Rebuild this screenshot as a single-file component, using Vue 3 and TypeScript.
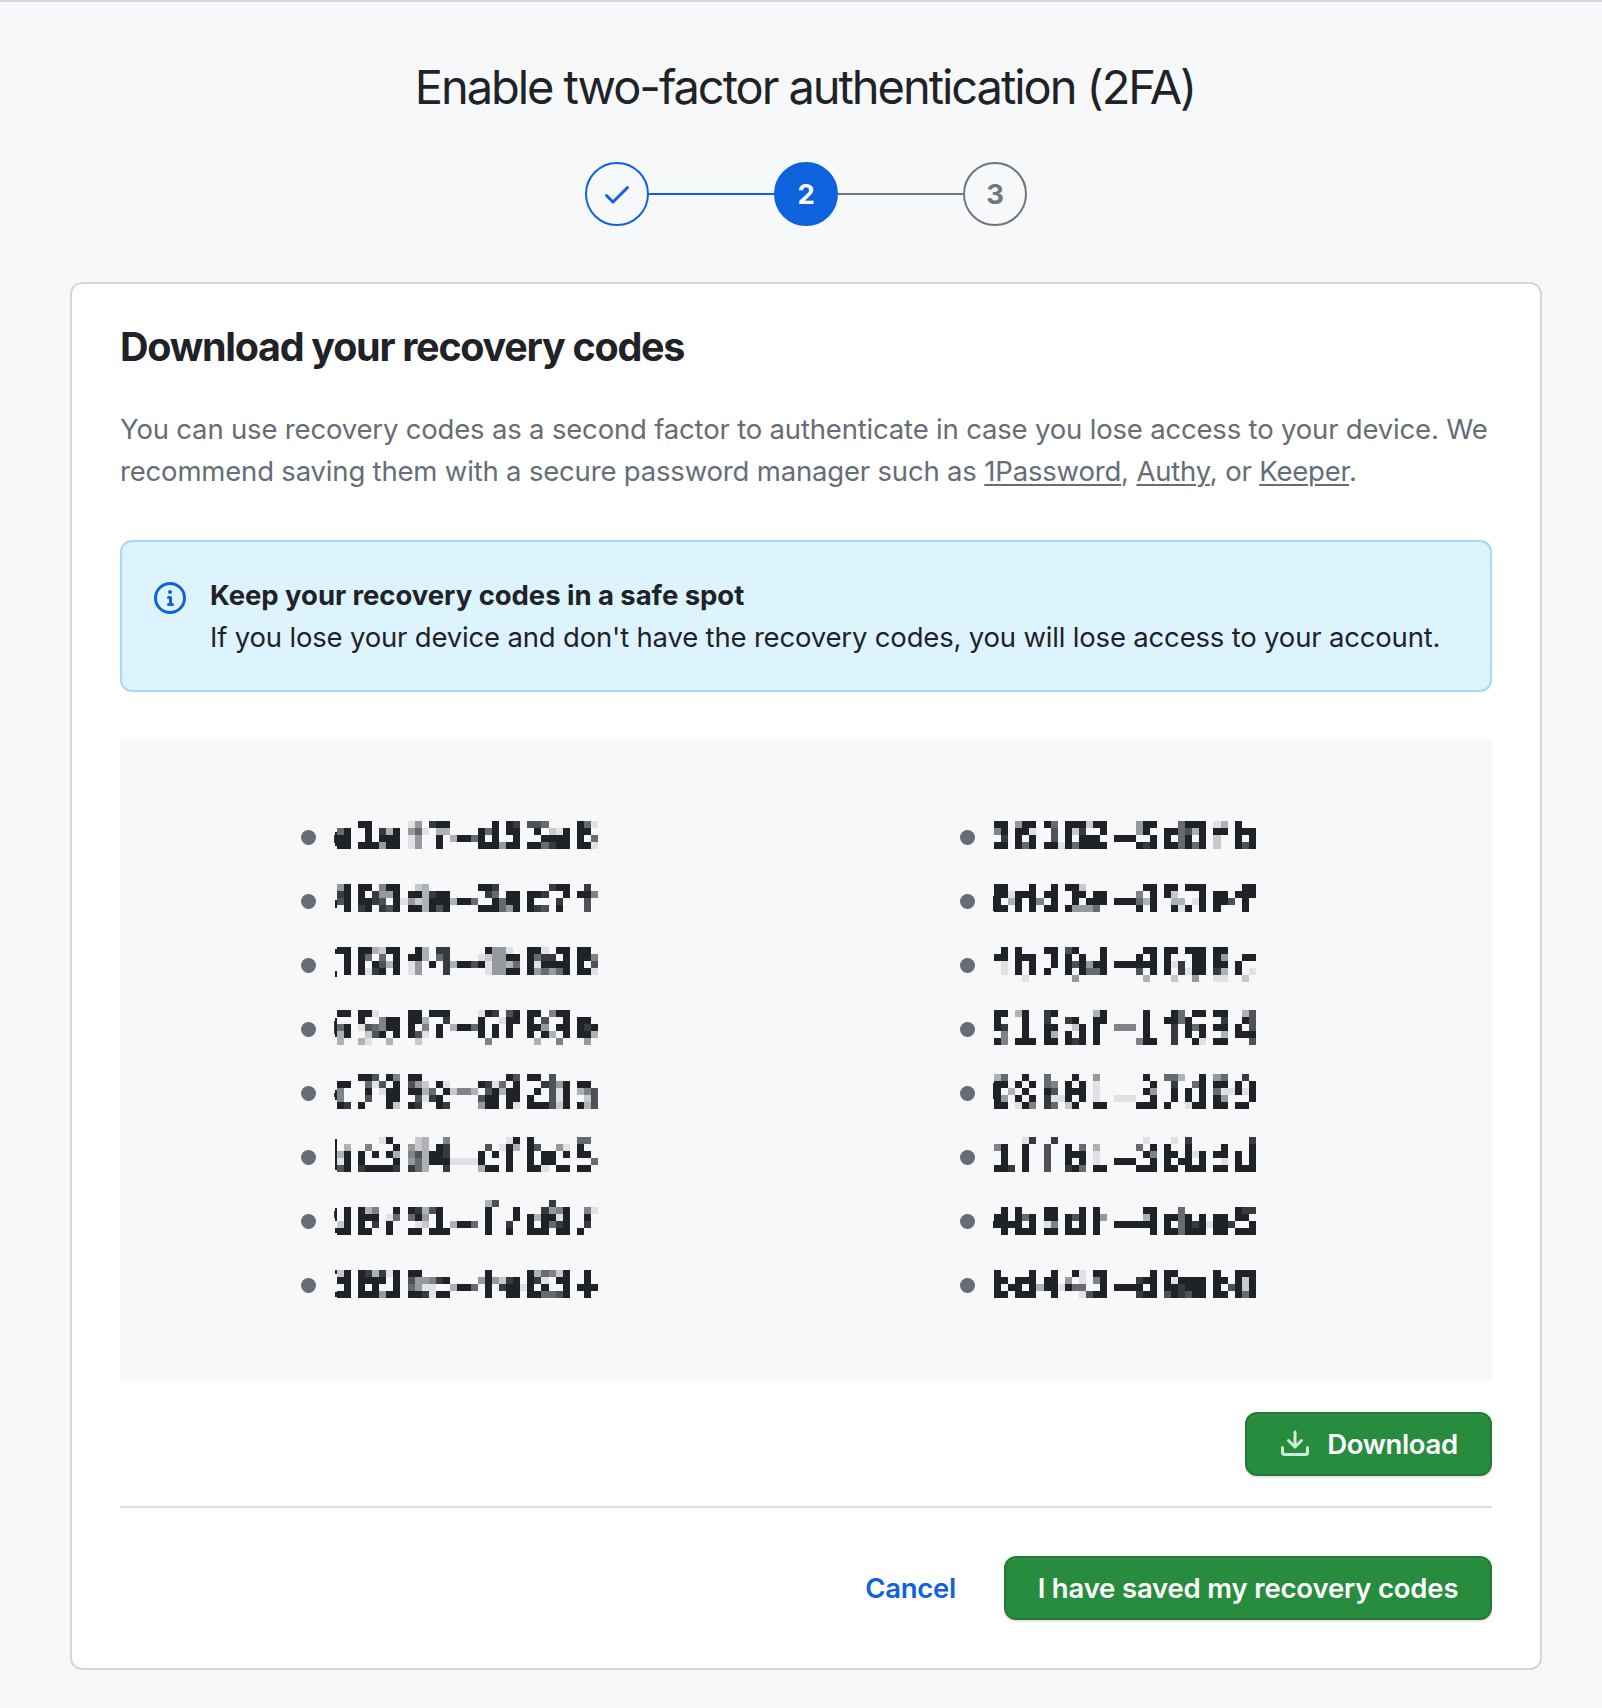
<script setup lang="ts">
interface Mosaic {
  top: number
  rows: string[]
  edge?: [number, number][]
}

interface Cell {
  x: number
  y: number
  w: number
  h: number
  fill: string
}

// Each row is a strip of redaction blocks: "." is clear, 1-9 is the darkness.
const left: Mosaic[] = [
  { top: 15, edge: [[11, 14]], rows: [
    '...99.....14.899......9.98.776....961',
    '69..9.839.461.33....969.99..9.219.99.',
    '99..9.999.14..9.39969.9..9...9999.9.6',
    '99.999499.14..9.....999499.996899.991'] },
  { top: 14, edge: [[16, 8]], rows: [
    '49.99.599..23.......998.......899..8.',
    '89.9.8449.993899.....86.99.998..9.995',
    '79.9987.914239993996..9699.9...8...7.',
    '.9.89.879.993979....999649.987.9...7.'] },
  { top: 13, edge: [[2, 5], [24, 6]], rows: [
    '99.993299..93.88.....9441..991.99.99.',
    '.9.96.6.9.993.68....124499.9688.9.995',
    '.9.9.9739.14.9.83997914436.919999.9.7',
    '.9.9189.9.14...8.....14499.946469.991'] },
  { top: 12, edge: [[8, 19]], rows: [
    '99.991....99.999....198.79.99.599....',
    '...9..599.993..8....9..199.9.7..9.99.',
    '69.176599.9.5.9.39969.9.9..994.99.989',
    '39..279.9.971.9.....9.9.9..9.93.9.993',
    '3..31..3...2.........5......3..5...4.'] },
  { top: 12, edge: [[16, 10]], rows: [
    '...997.95.99............97.99.7......',
    '99..617.9.742.91....9816.9...8749.99.',
    '5...9.199.9936.92553.79399..9.719.357',
    '5...7..99..7189.....799.99.9..719..27',
    '98.9...92.98..98....499.91.999729.937'] },
  { top: 11, edge: [[2, 31]], rows: [
    '......19...23..5........19.9......66.',
    '.3..5...9.423.98.....7.193.97..41.9..',
    '39.9.9.93.573998....9.9.9..9.99.9.99.',
    '19.9....9.46399911119...9..9.99.....6',
    '79.899998.863..8....399.9..991.99.99.'] },
  { top: 10, edge: [[8, 13], [28, 5]], rows: [
    '.....................37.......8......',
    '.9.935..9.98379......9...9...8459..51',
    '.9.999.16.694.9......9...9.939919..9.',
    '29.9.8.9...12.9.3996.9..8..9.9689..8.',
    '99.99..9..99.999.....9..9..999.99.9..'] },
  { top: 16, edge: [[0, 4], [22, 5]], rows: [
    '29.983819.99.........9.....936529..9.',
    '99.9999.9.744589....494289.981.99..9.',
    '.9.9.9..9.6411..3996.9.89919.9..9.999',
    '99.999499.998199.....9..99.996679..9.'] },
]

const right: Mosaic[] = [
  { top: 15, rows: [
    '99.499.96.999299....499...6999.13.9..',
    '59.991..7.928..9....49..996739.99.999',
    '.8.9.9..7.9.999..999..9.9.69.9.2..9.9',
    '99.969.991969999....989.996969.2..979'] },
  { top: 14, edge: [[12, 15]], rows: [
    '99...9..9.992........99.99.999.....99',
    '991999.99..99.99....5.9.92...9.99.999',
    '9.39.95.9..9.999.999639..33.19.997.9.',
    '99.9.9.99.94446.....9.9..919.9.9...9.'] },
  { top: 13, rows: [
    '.9.9...99.79...9.....99.99.999.99....',
    '99.999..9.9.9..9....9.9.9...99.94..99',
    '.1.9.9..9.979499.999999.918.99.99.9..',
    '.1.9.9.9..9.9669....7.9.9.8199.83.9.1',
    '....1......4.........3...2..4..11..2.'] },
  { top: 12, rows: [
    '99.39..89.....39.....9...96.99.99..37',
    '9...9..8..89..99.....9..9969....8..97',
    '98..9..99..29.9..555.9...8.969.99.9.7',
    '.5..9..93.9.9.9......9...8.9.9..3.999',
    '95.999.99.989.9.....599..8..91.99...7'] },
  { top: 12, edge: [[9, 16]], rows: [
    '36..9..6...9..4......9..663..9.46..8.',
    '99.9.9.65.9.9.1.......9..8..69.99.9.9',
    '9.3.9..97.999.1......94..9.9.9.611919',
    '94.9.9.8119.9.1..111..9..9.9.9.94...9',
    '99.195.86.29..99....999.9..199.99.99.'] },
  { top: 11, rows: [
    '....18..8............1...1.8........8',
    '59..9..7..9.6.3.....6.9.9..9....9...9',
    '.9..9..7..999.1......95.99.919.99.9.9',
    '.9..9..7..9.9.1..999..9.9.99.9..1.9.9',
    '998.9..7..896.99....999.99.999.99.999'] },
  { top: 17, edge: [[14, 7]], rows: [
    '.9.9...99...9.9......99...6.......988',
    '99.969.99.979.94.....39.9969.9.99.99.',
    '9999.9.15.9.9.9..999999.9.69891998..9',
    '.9.999.99.999.9.......9.996999.99.999'] },
  { top: 16, rows: [
    '9....9..9..91.99......9.99.....9..999',
    '99.999.99.4.1.59....899.919999.99.929',
    '9.99.93991966..9.9999.9.998999.9.7929',
    '99.999..9...1799....899.798799.99.969'] },
]

function shade(level: number): string {
  const t = level / 9
  const mix = (a: number, b: number) => Math.round(a + (b - a) * t)
  return `rgb(${mix(247, 31)}, ${mix(249, 35)}, ${mix(251, 40)})`
}

function cells(m: Mosaic, pitch: number, bleed: boolean): Cell[] {
  const out: Cell[] = []
  m.rows.forEach((row, r) => {
    for (let c = 0; c < row.length; c++) {
      if (row[c] === '.') continue
      const x = Math.round(c * pitch)
      out.push({ x, y: r * 7, w: Math.round((c + 1) * pitch) - x, h: 7, fill: shade(Number(row[c])) })
    }
  })
  // Slivers left uncovered at the leading edge of the redaction.
  for (const [y, h] of m.edge ?? []) {
    out.push({ x: bleed ? -2 : -1, y, w: bleed ? 2 : 1, h, fill: shade(9) })
    if (bleed && h > 9 && h < 30) out.push({ x: -3, y: y + 3, w: 1, h: h - 6, fill: shade(8) })
  }
  return out
}

const columns = [
  { name: 'first', items: left.map((m) => ({ top: m.top, cells: cells(m, 7.05, true) })) },
  { name: 'second', items: right.map((m) => ({ top: m.top, cells: cells(m, 7.08, false) })) },
]
</script>

<template>
  <main class="page">
    <h1 class="title">Enable two-factor authentication (2FA)</h1>
    <div class="steps">
      <span class="step done">
        <svg width="32" height="32" viewBox="0 0 16 16" fill="currentColor"><path d="M13.78 4.22a.75.75 0 0 1 0 1.06l-7.25 7.25a.75.75 0 0 1-1.06 0L2.22 9.28a.751.751 0 0 1 .018-1.042.751.751 0 0 1 1.042-.018L6 10.94l6.72-6.72a.75.75 0 0 1 1.06 0Z" /></svg>
      </span>
      <span class="line blue"></span>
      <span class="step current">2</span>
      <span class="line"></span>
      <span class="step">3</span>
    </div>

    <section class="card">
      <h2>Download your recovery codes</h2>
      <p class="intro">
        You can use recovery codes as a second factor to authenticate in case you lose access to your device. We<br />
        recommend saving them with a secure password manager such as <a>1Password</a>, <a>Authy</a>, or <a>Keeper</a>.
      </p>

      <div class="notice">
        <svg width="32" height="32" viewBox="0 0 16 16" fill="currentColor"><path d="M0 8a8 8 0 1 1 16 0A8 8 0 0 1 0 8Zm8-6.5a6.5 6.5 0 1 0 0 13 6.5 6.5 0 0 0 0-13ZM6.5 7.75A.75.75 0 0 1 7.25 7h1a.75.75 0 0 1 .75.75v2.75h.25a.75.75 0 0 1 0 1.5h-2a.75.75 0 0 1 0-1.5h.25v-2h-.25a.75.75 0 0 1-.75-.75ZM8 6a1 1 0 1 1 0-2 1 1 0 0 1 0 2Z" /></svg>
        <div>
          <strong>Keep your recovery codes in a safe spot</strong><br />
          <span>If you lose your device and don't have the recovery codes, you will lose access to your account.</span>
        </div>
      </div>

      <div class="codes">
        <ul v-for="col in columns" :key="col.name" :class="col.name">
          <li v-for="(item, i) in col.items" :key="i">
            <i class="dot"></i>
            <svg class="mosaic" :style="{ marginTop: item.top + 'px' }" width="266" height="36" viewBox="-3 0 266 36" shape-rendering="crispEdges">
              <rect v-for="(c, k) in item.cells" :key="k" :x="c.x" :y="c.y" :width="c.w" :height="c.h" :fill="c.fill" />
            </svg>
          </li>
        </ul>
      </div>

      <div class="row">
        <button class="btn download">
          <svg width="32" height="32" viewBox="0 0 16 16" fill="currentColor"><path d="M2.75 14A1.75 1.75 0 0 1 1 12.25v-2.5a.75.75 0 0 1 1.5 0v2.5c0 .138.112.25.25.25h10.5a.25.25 0 0 0 .25-.25v-2.5a.75.75 0 0 1 1.5 0v2.5A1.75 1.75 0 0 1 13.25 14Z" /><path d="M7.25 7.689V2a.75.75 0 0 1 1.5 0v5.689l1.97-1.969a.749.749 0 1 1 1.06 1.06l-3.25 3.25a.749.749 0 0 1-1.06 0L4.22 6.78a.749.749 0 1 1 1.06-1.06l1.97 1.969Z" /></svg>
          <span>Download</span>
        </button>
      </div>
      <div class="rule"></div>
      <div class="row">
        <a class="cancel">Cancel</a>
        <button class="btn saved"><span>I have saved my recovery codes</span></button>
      </div>
    </section>
  </main>
</template>

<style>
body {
  margin: 0;
  background: #f6f8fa;
}
</style>

<style scoped>
.page {
  box-sizing: border-box;
  width: 1602px;
  height: 1708px;
  padding: 55px 60px 0 70px;
  border-top: 2px solid #d0d7de;
  background: #f6f8fa;
  color: #1f2328;
  font: 400 27.5px/42px Inter, "Liberation Sans", sans-serif;
  letter-spacing: -0.18px;
  white-space: nowrap;
  overflow: hidden;
}
.title {
  margin: 0;
  padding-right: 2px;
  font-size: 47px;
  line-height: 60px;
  font-weight: 385;
  text-align: center;
  letter-spacing: -2.05px;
}
.steps {
  display: flex;
  align-items: center;
  justify-content: center;
  margin-top: 45px;
}
.step {
  box-sizing: border-box;
  display: flex;
  align-items: center;
  justify-content: center;
  width: 64px;
  height: 64px;
  border: 2px solid #6e7781;
  border-radius: 50%;
  color: #6e7781;
  font-weight: 700;
}
.done {
  border-color: #0f62de;
  color: #0f62de;
}
.current {
  border-color: #0f62de;
  background: #0f62de;
  color: #fff;
}
.line {
  width: 125px;
  height: 2px;
  background: #6e7781;
}
.blue {
  background: #0f62de;
}
.card {
  box-sizing: border-box;
  height: 1388px;
  margin-top: 56px;
  padding: 38px 48px 48px;
  border: 2px solid #d0d7de;
  border-radius: 12px;
  background: #fff;
}
h2 {
  margin: 0;
  font-size: 39.5px;
  line-height: 50px;
  font-weight: 650;
  letter-spacing: -1.28px;
}
.intro {
  margin: 36px 0 48px;
  color: #656d76;
}
.intro a {
  text-decoration: underline;
  text-decoration-thickness: 2px;
  text-underline-offset: 3px;
}
.notice {
  box-sizing: border-box;
  display: flex;
  gap: 24px;
  height: 152px;
  padding: 32px;
  border: 2px solid #a6d8ff;
  border-radius: 12px;
  background: #ddf4ff;
}
.notice svg {
  margin-top: 8px;
  color: #0f62de;
  flex: none;
}
.notice strong {
  font-weight: 650;
  letter-spacing: -0.05px;
}
.codes {
  box-sizing: border-box;
  display: grid;
  grid-template-columns: 659px 1fr;
  height: 640px;
  margin: 48px 0 32px;
  padding: 66px 0 0 181px;
  background: #f6f8fa;
}
ul {
  margin: 0;
  padding: 0;
  list-style: none;
}
li {
  display: flex;
  gap: 18px;
  height: 64px;
}
.second li {
  gap: 16px;
}
.dot {
  flex: none;
  width: 15px;
  height: 15px;
  margin-top: 24px;
  border-radius: 50%;
  background: #656d76;
}
.mosaic {
  flex: none;
}
.row {
  display: flex;
  justify-content: flex-end;
  align-items: center;
  gap: 48px;
}
.btn {
  box-sizing: border-box;
  display: flex;
  align-items: center;
  justify-content: center;
  height: 64px;
  margin: 0;
  padding: 0;
  border: 2px solid #237a37;
  border-radius: 12px;
  background: #288c3f;
  color: #fff;
  font: 580 27.5px/42px Inter, "Liberation Sans", sans-serif;
  letter-spacing: -0.17px;
  box-shadow: 0 2px 0 rgba(31, 35, 40, 0.1), inset 0 2px 0 rgba(255, 255, 255, 0.03);
}
.download {
  width: 247px;
  gap: 16px;
  letter-spacing: -0.35px;
}
.download svg {
  color: #d4e8d8;
}
.saved {
  width: 488px;
}
.rule {
  height: 2px;
  margin: 30px 0 48px;
  background: #d8dee4;
}
.cancel {
  color: #0f62de;
  font-weight: 580;
  letter-spacing: -0.25px;
}
</style>
